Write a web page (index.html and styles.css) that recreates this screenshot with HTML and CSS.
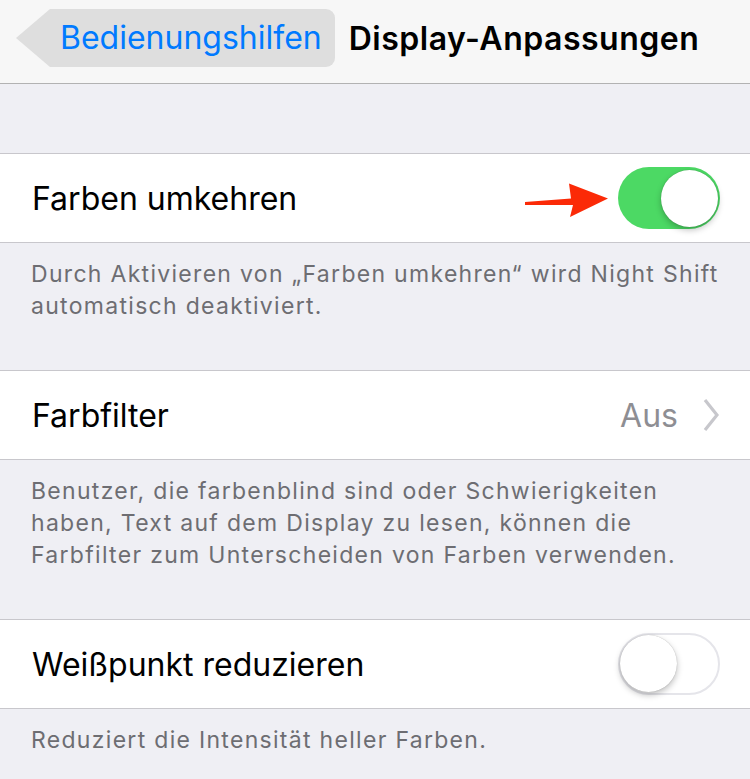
FILE: index.html
```html
<!DOCTYPE html>
<html lang="de">
<head>
<meta charset="utf-8">
<title>Display-Anpassungen</title>
<link rel="stylesheet" href="styles.css">
</head>
<body>
<header class="nav">
  <div class="back"><span class="back-label">Bedienungshilfen</span></div>
  <h1 class="title">Display-Anpassungen</h1>
</header>
<main class="content">
  <div class="spacer"></div>
  <section class="group">
    <div class="row">
      <span class="row-title">Farben umkehren</span>
      <div class="row-accessory">
        <svg class="arrow" width="86" height="38" viewBox="0 0 86 38">
          <path d="M1 20 L47 16.5 L45 1.5 L84 16.5 L46 35 L49 23 L1 23 Z" fill="#fb2a07"/>
        </svg>
        <span class="switch on"><span class="knob"></span></span>
      </div>
    </div>
  </section>
  <p class="footer">Durch Aktivieren von „Farben umkehren“ wird Night Shift automatisch deaktiviert.</p>
  <section class="group">
    <div class="row">
      <span class="row-title">Farbfilter</span>
      <div class="row-accessory">
        <span class="detail">Aus</span>
        <svg class="chevron" width="16" height="34" viewBox="0 0 16 34">
          <path d="M2 2 L14 17 L2 32" fill="none" stroke="#c7c7cc" stroke-width="3.2"/>
        </svg>
      </div>
    </div>
  </section>
  <p class="footer">Benutzer, die farbenblind sind oder Schwierigkeiten haben, Text auf dem Display zu lesen, können die Farbfilter zum Unterscheiden von Farben verwenden.</p>
  <section class="group">
    <div class="row">
      <span class="row-title">Weißpunkt reduzieren</span>
      <div class="row-accessory">
        <span class="switch off"><span class="knob"></span></span>
      </div>
    </div>
  </section>
  <p class="footer">Reduziert die Intensität heller Farben.</p>
</main>
</body>
</html>
```
FILE: styles.css
```css
* { box-sizing: border-box; }
html, body {
  margin: 0;
  padding: 0;
}
body {
  width: 750px;
  height: 779px;
  overflow: hidden;
  background: #efeff4;
  font-family: Inter, "Liberation Sans", Arial, sans-serif;
  -webkit-font-smoothing: antialiased;
}
.nav {
  height: 84px;
  background: #f7f7f7;
  border-bottom: 1px solid #b2b2b2;
  display: flex;
  align-items: flex-start;
  padding-top: 9px;
}
.back {
  position: relative;
  margin-left: 50px;
  height: 58px;
  padding: 0 13px 0 10px;
  background: #dedede;
  border-radius: 0 9px 9px 0;
  display: flex;
  align-items: center;
}
.back::before {
  content: "";
  position: absolute;
  left: -34px;
  top: 0;
  border-right: 34px solid #dedede;
  border-top: 29px solid transparent;
  border-bottom: 29px solid transparent;
}
.back-label {
  color: #007aff;
  font-size: 32px;
  letter-spacing: 0;
  line-height: 1;
}
.title {
  margin: 0 0 0 14px;
  height: 58px;
  display: flex;
  align-items: center;
  font-size: 32px;
  font-weight: 600;
  color: #000;
  letter-spacing: 0.5px;
}
.spacer { height: 69px; }
.group {
  background: #fff;
  border-top: 1px solid #c8c7cc;
  border-bottom: 1px solid #c8c7cc;
}
.row {
  height: 88px;
  display: flex;
  align-items: center;
  justify-content: space-between;
  padding: 0 30px 0 32px;
}
.row-title {
  font-size: 32px;
  color: #000;
  letter-spacing: 0;
}
.row-accessory {
  display: flex;
  align-items: center;
}
.arrow { margin-right: 8px; margin-top: 5px; }
.detail {
  font-size: 32px;
  color: #8e8e93;
  margin-right: 25px;
}
.chevron { margin-right: 1px; }
.switch {
  position: relative;
  display: block;
  width: 102px;
  height: 62px;
  border-radius: 31px;
}
.switch.on { background: #4cd964; }
.switch.off {
  background: #fff;
  border: 2px solid #e5e5ea;
}
.knob {
  position: absolute;
  width: 57px;
  height: 57px;
  border-radius: 50%;
  background: #fff;
  box-shadow: 0 3px 6px rgba(0,0,0,0.25), 0 0 1px rgba(0,0,0,0.3);
}
.switch.on .knob { top: 3px; right: 2px; }
.switch.off .knob { top: 0px; left: 0px; }
.footer {
  margin: 0;
  padding: 15px 20px 48px 31px;
  font-size: 23px;
  line-height: 32px;
  color: #6d6d72;
  letter-spacing: 1.3px;
}
```
